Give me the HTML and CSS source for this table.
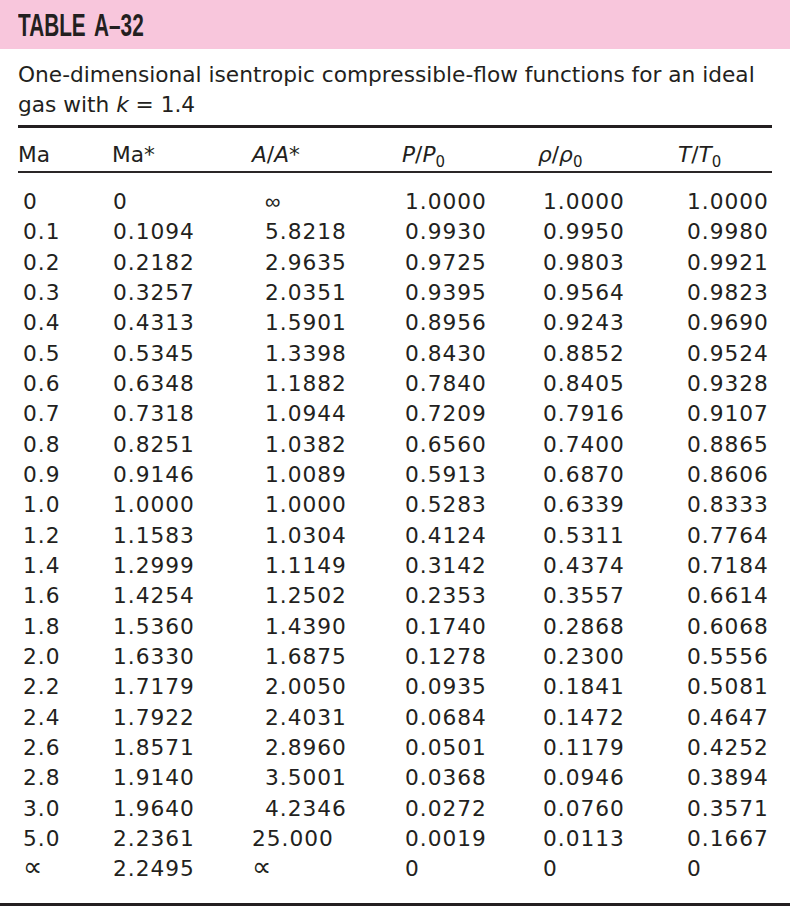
FILE: index.html
```html
<!DOCTYPE html>
<html lang="en">
<head>
<meta charset="utf-8">
<title>Table A–32</title>
<link rel="stylesheet" href="styles.css">
</head>
<body>
<div class="page">
  <header class="band"><h1 class="title">TABLE A–32</h1></header>
  <p class="caption">One-dimensional isentropic compressible-flow functions for an ideal<br>gas with <i>k</i> = 1.4</p>
  <table class="flow">
    <colgroup>
      <col class="w1"><col class="w2"><col class="w3"><col class="w4"><col class="w5"><col class="w6">
    </colgroup>
    <thead>
      <tr>
        <th>Ma</th>
        <th>Ma*</th>
        <th><i>A</i>/<i>A</i>*</th>
        <th><i>P</i>/<i>P</i><sub>0</sub></th>
        <th><i>ρ</i>/<i>ρ</i><sub>0</sub></th>
        <th><i>T</i>/<i>T</i><sub>0</sub></th>
      </tr>
    </thead>
    <tbody>
      <tr class="first"><td>0</td><td>0</td><td class="ind sym">∞</td><td>1.0000</td><td>1.0000</td><td>1.0000</td></tr>
      <tr><td>0.1</td><td>0.1094</td><td class="ind">5.8218</td><td>0.9930</td><td>0.9950</td><td>0.9980</td></tr>
      <tr><td>0.2</td><td>0.2182</td><td class="ind">2.9635</td><td>0.9725</td><td>0.9803</td><td>0.9921</td></tr>
      <tr><td>0.3</td><td>0.3257</td><td class="ind">2.0351</td><td>0.9395</td><td>0.9564</td><td>0.9823</td></tr>
      <tr><td>0.4</td><td>0.4313</td><td class="ind">1.5901</td><td>0.8956</td><td>0.9243</td><td>0.9690</td></tr>
      <tr><td>0.5</td><td>0.5345</td><td class="ind">1.3398</td><td>0.8430</td><td>0.8852</td><td>0.9524</td></tr>
      <tr><td>0.6</td><td>0.6348</td><td class="ind">1.1882</td><td>0.7840</td><td>0.8405</td><td>0.9328</td></tr>
      <tr><td>0.7</td><td>0.7318</td><td class="ind">1.0944</td><td>0.7209</td><td>0.7916</td><td>0.9107</td></tr>
      <tr><td>0.8</td><td>0.8251</td><td class="ind">1.0382</td><td>0.6560</td><td>0.7400</td><td>0.8865</td></tr>
      <tr><td>0.9</td><td>0.9146</td><td class="ind">1.0089</td><td>0.5913</td><td>0.6870</td><td>0.8606</td></tr>
      <tr><td>1.0</td><td>1.0000</td><td class="ind">1.0000</td><td>0.5283</td><td>0.6339</td><td>0.8333</td></tr>
      <tr><td>1.2</td><td>1.1583</td><td class="ind">1.0304</td><td>0.4124</td><td>0.5311</td><td>0.7764</td></tr>
      <tr><td>1.4</td><td>1.2999</td><td class="ind">1.1149</td><td>0.3142</td><td>0.4374</td><td>0.7184</td></tr>
      <tr><td>1.6</td><td>1.4254</td><td class="ind">1.2502</td><td>0.2353</td><td>0.3557</td><td>0.6614</td></tr>
      <tr><td>1.8</td><td>1.5360</td><td class="ind">1.4390</td><td>0.1740</td><td>0.2868</td><td>0.6068</td></tr>
      <tr><td>2.0</td><td>1.6330</td><td class="ind">1.6875</td><td>0.1278</td><td>0.2300</td><td>0.5556</td></tr>
      <tr><td>2.2</td><td>1.7179</td><td class="ind">2.0050</td><td>0.0935</td><td>0.1841</td><td>0.5081</td></tr>
      <tr><td>2.4</td><td>1.7922</td><td class="ind">2.4031</td><td>0.0684</td><td>0.1472</td><td>0.4647</td></tr>
      <tr><td>2.6</td><td>1.8571</td><td class="ind">2.8960</td><td>0.0501</td><td>0.1179</td><td>0.4252</td></tr>
      <tr><td>2.8</td><td>1.9140</td><td class="ind">3.5001</td><td>0.0368</td><td>0.0946</td><td>0.3894</td></tr>
      <tr><td>3.0</td><td>1.9640</td><td class="ind">4.2346</td><td>0.0272</td><td>0.0760</td><td>0.3571</td></tr>
      <tr><td>5.0</td><td>2.2361</td><td>25.000</td><td>0.0019</td><td>0.0113</td><td>0.1667</td></tr>
      <tr class="last"><td class="sym"><span class="prop">∝</span></td><td>2.2495</td><td class="sym"><span class="prop">∝</span></td><td>0</td><td>0</td><td>0</td></tr>
    </tbody>
  </table>
  <div class="foot-rule"></div>
</div>
</body>
</html>
```

FILE: styles.css
```css
html, body {
  margin: 0;
  padding: 0;
  background: #ffffff;
}

.page {
  width: 790px;
  color: #231f20;
  font-family: "DejaVu Sans", "Liberation Sans", sans-serif;
}

.band {
  height: 49px;
  background: #f8c6dc;
  padding-left: 18px;
  box-sizing: border-box;
}

.title {
  display: inline-block;
  margin: 0;
  padding-top: 3px;
  font-family: "Liberation Sans", Arial, sans-serif;
  font-weight: bold;
  font-size: 31px;
  line-height: 46px;
  word-spacing: 5px;
  color: #231f20;
  transform: scaleX(0.67);
  transform-origin: left center;
  white-space: nowrap;
}

.caption {
  margin: 11px 0 0 18px;
  font-size: 21.7px;
  line-height: 30px;
}

.caption i {
  font-style: italic;
}

.flow {
  margin-left: 18px;
  margin-top: 5px;
  width: 754px;
  table-layout: fixed;
  border-collapse: separate;
  border-spacing: 0;
  font-size: 21.7px;
}

.w1 { width: 94px; }
.w2 { width: 140px; }
.w3 { width: 150px; }
.w4 { width: 136px; }
.w5 { width: 140px; }
.w6 { width: 94px; }

.flow th {
  text-align: left;
  font-weight: normal;
  padding: 12px 0 1px 0;
  line-height: 30px;
  border-top: 3px solid #231f20;
  border-bottom: 2px solid #2a2627;
  white-space: nowrap;
}

.flow th i {
  font-style: italic;
}

.flow sub {
  font-size: 15px;
  line-height: 0;
  vertical-align: -5px;
}

.flow td {
  padding: 0;
  line-height: 30.33px;
  letter-spacing: 1px;
  white-space: nowrap;
}

.flow td:nth-child(1) { padding-left: 5px; }
.flow td:nth-child(2) { padding-left: 1px; }
.flow td:nth-child(3) { padding-left: 0; }
.flow td:nth-child(4) { padding-left: 3px; }
.flow td:nth-child(5) { padding-left: 5px; }
.flow td:nth-child(6) { padding-left: 9px; }

.flow td.ind { padding-left: 13px; }

.flow td.sym {
  letter-spacing: 0;
  font-weight: 300;
}

.flow .prop {
  font-size: 27px;
  line-height: 0;
}

.flow tr.first td { padding-top: 14px; }

.foot-rule {
  margin-top: 18px;
  height: 3px;
  background: #231f20;
}
```
